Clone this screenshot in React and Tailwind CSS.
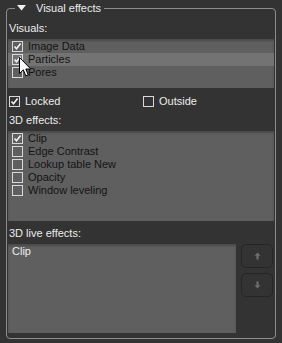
import React from "react";

function Check({ checked, className = "" }) {
  return (
    <div className={"w-[11px] h-[11px] border border-[#d9d9d9] shrink-0 relative " + className}>
      {checked && (
        <svg className="absolute left-0 top-0" width="9" height="9" viewBox="0 0 9 9">
          <path d="M1.5 4.5 L3.5 6.8 L7.6 1.6" fill="none" stroke="#f2f2f2" strokeWidth="1.6" />
        </svg>
      )}
    </div>
  );
}

function ListRow({ label, checked, highlight }) {
  return (
    <div className={"h-[13px] flex items-center pl-[4px] " + (highlight ? "bg-[#737373]" : "")}>
      <Check checked={checked} />
      <span className="ml-[5px] text-[#141414] leading-[13px]">{label}</span>
    </div>
  );
}

function ArrowBtn({ up }) {
  return (
    <div className="w-[32px] h-[24px] rounded-[5px] border border-[#262626] bg-[#333333] flex items-center justify-center">
      <svg width="7" height="8" viewBox="0 0 7 8" className={up ? "" : "rotate-180"}>
        <path d="M3.5 0.5 L6.5 3.8 L4.6 3.8 L4.6 7.5 L2.4 7.5 L2.4 3.8 L0.5 3.8 Z" fill="#6e6e6e" />
      </svg>
    </div>
  );
}

export default function App() {
  return (
    <div
      className="w-[282px] h-[343px] bg-[#333333] pt-[8px] text-[11px] relative overflow-hidden"
      style={{ fontFamily: '"Liberation Sans", Arial, sans-serif' }}
    >
      <div className="ml-[6px] w-[270px] h-[331px] border border-[#8d8d8d] rounded-[4px] relative px-[1px] flex flex-col">
        <div className="absolute -top-[8px] left-[8px] bg-[#333333] pl-[2px] pr-[3px] h-[15px] flex items-center">
          <svg width="9" height="6" viewBox="0 0 9 6" className="-mt-[2px]">
            <path d="M0 0 L9 0 L4.5 5.5 Z" fill="#f0f0f0" />
          </svg>
          <span className="ml-[10px] text-[#ececec] leading-[15px]">Visual effects</span>
        </div>

        <div className="mt-[13px] h-[13px] leading-[13px] pl-[1px] text-[#ececec]">Visuals:</div>
        <div className="mt-[4px] h-[49px] bg-[#5f5f5f] shadow-[inset_0_2px_2px_rgba(0,0,0,0.22)] pt-[1px]">
          <ListRow label="Image Data" checked />
          <ListRow label="Particles" checked highlight />
          <ListRow label="Pores" />
        </div>

        <div className="mt-[7px] h-[13px] flex items-center text-[#ececec]">
          <div className="flex items-center w-[135px] pl-[1px]">
            <Check checked />
            <span className="ml-[5px] leading-[13px]">Locked</span>
          </div>
          <div className="flex items-center">
            <Check />
            <span className="ml-[5px] leading-[13px]">Outside</span>
          </div>
        </div>

        <div className="mt-[6px] h-[13px] leading-[13px] pl-[1px] text-[#ececec]">3D effects:</div>
        <div className="mt-[4px] h-[90px] bg-[#5f5f5f] shadow-[inset_0_2px_2px_rgba(0,0,0,0.22)] pt-[1px]">
          <ListRow label="Clip" checked />
          <ListRow label="Edge Contrast" />
          <ListRow label="Lookup table New" />
          <ListRow label="Opacity" />
          <ListRow label="Window leveling" />
        </div>

        <div className="mt-[6px] h-[13px] leading-[13px] pl-[1px] text-[#ececec]">3D live effects:</div>
        <div className="mt-[4px] h-[89px] flex">
          <div className="w-[228px] h-[89px] bg-[#5f5f5f] shadow-[inset_0_2px_2px_rgba(0,0,0,0.22)] pt-[1px] pl-[4px]">
            <div className="h-[13px] leading-[13px] text-[#ececec]">Clip</div>
          </div>
          <div className="ml-[5px] flex flex-col gap-[5px]">
            <ArrowBtn up />
            <ArrowBtn />
          </div>
        </div>
      </div>

      <svg className="absolute left-[19px] top-[57px]" width="13" height="21" viewBox="0 0 13 21">
        <path
          d="M0.5 0.5 L0.5 16.5 L4.3 12.8 L6.8 18.8 L9.2 17.8 L6.8 12 L11.8 12 Z"
          fill="#ffffff"
          stroke="#000000"
          strokeWidth="1"
          strokeLinejoin="miter"
        />
      </svg>
    </div>
  );
}
